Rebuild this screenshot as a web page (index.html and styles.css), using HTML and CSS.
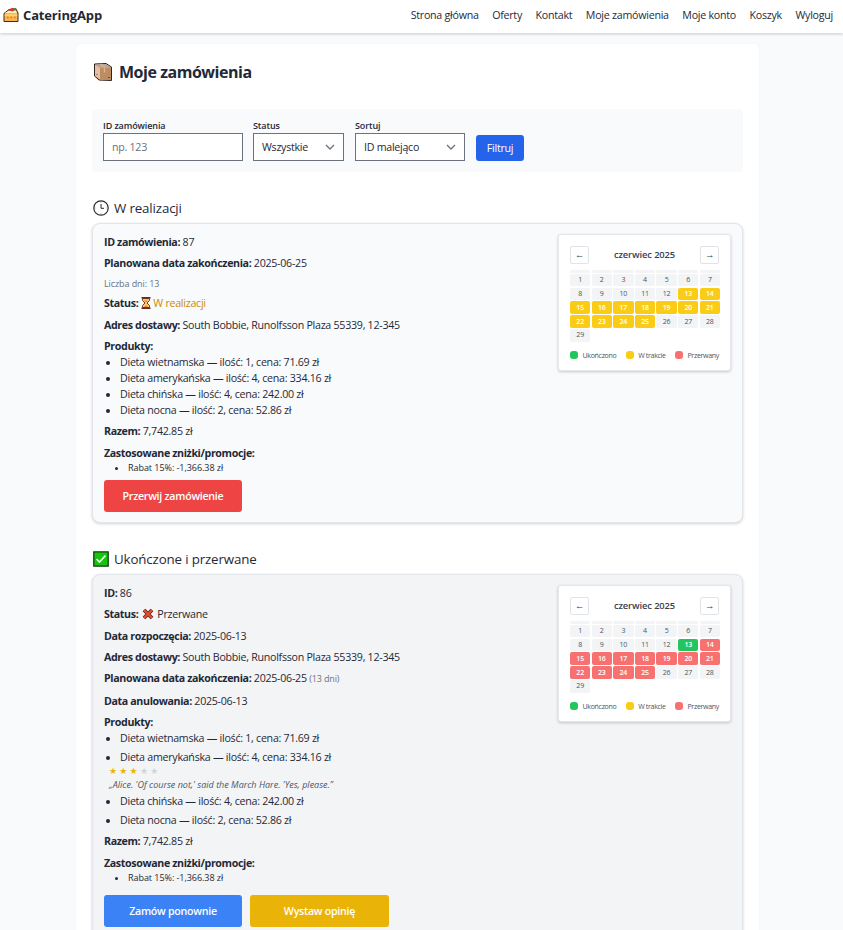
FILE: index.html
```html
<!DOCTYPE html>
<html lang="pl">
<head>
<meta charset="utf-8">
<title>CateringApp</title>
<link rel="stylesheet" href="styles.css">
</head>
<body>
<header class="navbar">
  <a class="brand"><svg class="brand-icon" viewBox="0 0 16 16"><path d="M1 6.5 6 2.5 13 2l2 4v8.5H1z" fill="#f8b64c" stroke="#3b2a20"/><path d="M2 6 7 3h5l2 3z" fill="#fff0c9"/><path d="M5 3.5 9 .8l4 1.2-3 2.5z" fill="#d63b2f"/><path d="M10 1.2 13.5 1 12 4z" fill="#3b8b3f"/><path d="M1.8 7.2h12.4v2H1.8z" fill="#ffd36b"/><path d="M4 10.5h1.5m2 0H9m2 0h1.5" stroke="#e27128" stroke-width="1.5"/></svg><span class="brand-name">CateringApp</span></a>
  <nav class="links"><a>Strona główna</a><a>Oferty</a><a>Kontakt</a><a>Moje zamówienia</a><a>Moje konto</a><a>Koszyk</a><a>Wyloguj</a></nav>
</header>
<main class="page">
  <h1 class="title"><svg class="box-icon" viewBox="0 0 20 20"><path d="M1.5 2 13 1.5 18.5 5v13.5L6 18 1.5 14z" fill="#c49a74" stroke="#30241f"/><path d="M2 2.5 13 2l5 3.5H7z" fill="#b9a79a"/><path d="M2 3 7 6v11.5L2 13.5z" fill="#e5c0a8"/><path d="M7 6h11v12H7z" fill="#bd8d62"/><path d="M11.5 6v4.5M7.5 2.2 12 5.5" stroke="#d8b38d" stroke-width="1.5"/><path d="M15 15.5h2M3.5 12l1 1" stroke="#6c4935"/></svg><span>Moje zamówienia</span></h1>
  <form class="filters">
    <label class="field"><span class="label">ID zamówienia</span><input class="control input-id" type="text" placeholder="np. 123"></label>
    <div class="field"><span class="label">Status</span><div class="control select status-select"><span>Wszystkie</span><svg class="chevron" viewBox="0 0 10 6"><path d="m1 1 4 4 4-4" fill="none" stroke="#6b7280" stroke-width="1.3"/></svg></div></div>
    <div class="field"><span class="label">Sortuj</span><div class="control select sort-select"><span>ID malejąco</span><svg class="chevron" viewBox="0 0 10 6"><path d="m1 1 4 4 4-4" fill="none" stroke="#6b7280" stroke-width="1.3"/></svg></div></div>
    <button class="filter-button" type="button">Filtruj</button>
  </form>

  <h2 class="section-title"><svg class="section-icon" viewBox="0 0 16 16"><circle cx="8" cy="8" r="7.2" fill="#fff" stroke="#292929" stroke-width="1.2"/><path d="M8 4v4.3h3" fill="none" stroke="#292929"/><path d="M8 1.8v1M8 13.2v1M1.8 8h1M13.2 8h1" stroke="#999" stroke-width=".7"/></svg><span>W realizacji</span></h2>
  <article class="card active-card">
    <div class="details">
      <p><b>ID zamówienia:</b> 87</p>
      <p class="date-row"><b>Planowana data zakończenia:</b> 2025-06-25</p>
      <p class="days">Liczba dni: 13</p>
      <p><b>Status:</b> <svg class="hourglass" viewBox="0 0 10 12"><path d="M1.5 1.5v2L4 6 1.5 8.5v2h7v-2L6 6l2.500-2.500v-2z" fill="#f9c779" stroke="#794022"/><path d="M.5.8h9M.5 11.200h9" stroke="#622b1b" stroke-width="1.500"/><path d="M3 3.500h4L5 5.500zM3 10l2-2 2 2z" fill="#ed8b22"/></svg> <span class="pending">W realizacji</span></p>
      <p><b>Adres dostawy:</b> <span class="address">South Bobbie, Runolfsson Plaza 55339, 12-345</span></p>
      <p class="list-title"><b>Produkty:</b></p>
      <ul class="products"><li>Dieta wietnamska — ilość: 1, cena: 71.69 zł</li><li>Dieta amerykańska — ilość: 4, cena: 334.16 zł</li><li>Dieta chińska — ilość: 4, cena: 242.00 zł</li><li>Dieta nocna — ilość: 2, cena: 52.86 zł</li></ul>
      <p><b>Razem:</b> 7,742.85 zł</p>
      <p class="list-title"><b>Zastosowane zniżki/promocje:</b></p>
      <ul class="discounts"><li>Rabat 15%: -1,366.38 zł</li></ul>
      <div class="actions"><button class="action cancel" type="button">Przerwij zamówienie</button></div>
    </div>
    <aside class="calendar">
      <div class="calendar-head"><button class="arrow" type="button">←</button><strong>czerwiec 2025</strong><button class="arrow" type="button">→</button></div>
      <div class="days-grid"><i></i><i></i><i></i><i></i><i></i><i></i><i></i><span>1</span><span>2</span><span>3</span><span>4</span><span>5</span><span>6</span><span>7</span><span>8</span><span>9</span><span>10</span><span>11</span><span>12</span><span class="yellow">13</span><span class="yellow">14</span><span class="yellow">15</span><span class="yellow">16</span><span class="yellow">17</span><span class="yellow">18</span><span class="yellow">19</span><span class="yellow">20</span><span class="yellow">21</span><span class="yellow">22</span><span class="yellow">23</span><span class="yellow">24</span><span class="yellow">25</span><span>26</span><span>27</span><span>28</span><span>29</span></div>
      <div class="legend"><span><em class="green"></em>Ukończono</span><span><em class="yellow"></em>W trakcie</span><span><em class="red"></em>Przerwany</span></div>
    </aside>
  </article>

  <h2 class="section-title finished-title"><svg class="section-icon" viewBox="0 0 16 16"><path d="M.8.8h14.400v14.400H.8z" fill="#16c60c" stroke="#173d17" stroke-width="1.300"/><path d="m3.500 8 3 3 6-6.500" fill="none" stroke="#f3fff3" stroke-width="1.700"/></svg><span>Ukończone i przerwane</span></h2>
  <article class="card finished-card">
    <div class="details">
      <p><b>ID:</b> 86</p>
      <p><b>Status:</b> <svg class="cross" viewBox="0 0 12 12"><path d="m2 2 8 8m0-8-8 8" stroke="#572620" stroke-width="3.800"/><path d="m2 2 8 8m0-8-8 8" stroke="#e84b31" stroke-width="2.200"/></svg> Przerwane</p>
      <p><b>Data rozpoczęcia:</b> 2025-06-13</p>
      <p><b>Adres dostawy:</b> <span class="address">South Bobbie, Runolfsson Plaza 55339, 12-345</span></p>
      <p><b>Planowana data zakończenia:</b> 2025-06-25 <small>(13 dni)</small></p>
      <p><b>Data anulowania:</b> 2025-06-13</p>
      <p class="list-title"><b>Produkty:</b></p>
      <ul class="products spaced"><li>Dieta wietnamska — ilość: 1, cena: 71.69 zł</li><li>Dieta amerykańska — ilość: 4, cena: 334.16 zł<div class="review"><div class="stars"><span>★</span><span>★</span><span>★</span><span class="empty">★</span><span class="empty">★</span></div><div class="quote">„Alice. 'Of course not,' said the March Hare. 'Yes, please.”</div></div></li><li>Dieta chińska — ilość: 4, cena: 242.00 zł</li><li>Dieta nocna — ilość: 2, cena: 52.86 zł</li></ul>
      <p><b>Razem:</b> 7,742.85 zł</p>
      <p class="list-title"><b>Zastosowane zniżki/promocje:</b></p>
      <ul class="discounts"><li>Rabat 15%: -1,366.38 zł</li></ul>
      <div class="actions"><button class="action again" type="button">Zamów ponownie</button><button class="action opinion" type="button">Wystaw opinię</button></div>
    </div>
    <aside class="calendar">
      <div class="calendar-head"><button class="arrow" type="button">←</button><strong>czerwiec 2025</strong><button class="arrow" type="button">→</button></div>
      <div class="days-grid"><i></i><i></i><i></i><i></i><i></i><i></i><i></i><span>1</span><span>2</span><span>3</span><span>4</span><span>5</span><span>6</span><span>7</span><span>8</span><span>9</span><span>10</span><span>11</span><span>12</span><span class="green">13</span><span class="red">14</span><span class="red">15</span><span class="red">16</span><span class="red">17</span><span class="red">18</span><span class="red">19</span><span class="red">20</span><span class="red">21</span><span class="red">22</span><span class="red">23</span><span class="red">24</span><span class="red">25</span><span>26</span><span>27</span><span>28</span><span>29</span></div>
      <div class="legend"><span><em class="green"></em>Ukończono</span><span><em class="yellow"></em>W trakcie</span><span><em class="red"></em>Przerwany</span></div>
    </aside>
  </article>
</main>
</body>
</html>
```
FILE: styles.css
```css
*{box-sizing:border-box}
html{height:930px;overflow:hidden}
body{margin:0;height:930px;overflow:hidden;background:#f9fafb;color:#1f2937;font:10.67px/16px "Open Sans","Noto Sans",sans-serif;letter-spacing:-.27px}
h1,h2,p,ul{margin:0;padding:0}
button,input{font:inherit;letter-spacing:inherit}
svg{flex:none}
b{font-weight:700;letter-spacing:-.37px}
.navbar{height:33px;padding:0 10px 3px 3px;display:flex;align-items:center;justify-content:space-between;background:#fff;box-shadow:0 1px 3px #0003;position:relative}
.brand{display:flex;align-items:center;gap:4px}
.brand-icon{width:16px;height:16px}
.brand-name{font-size:13px;font-weight:700;letter-spacing:-.15px}
.links{display:flex;gap:13.5px;letter-spacing:-.25px}
.page{width:683px;margin:11px auto 0 76px;padding:17px 16px;background:#fff;border-radius:5px;box-shadow:0 0 2px #0000000d}
.title{height:22px;display:flex;align-items:center;gap:6px;font-size:16px;font-weight:700;letter-spacing:-.47px;padding-left:1px}
.box-icon{width:20px;height:20px}
.filters{height:63px;margin-top:26px;padding:11px;background:#f9fafb;border-radius:4px;display:flex;align-items:flex-end}
.field{display:flex;flex-direction:column;margin-right:11px}
.field:first-child{margin-right:10px}
.label{font-size:9px;font-weight:600;line-height:13px;letter-spacing:-.1px;height:14px}
.control{height:28px;border:1px solid #6b7280;border-radius:0;background:#fff;padding:0 8px;color:#1f2937}
.control::placeholder{color:#6b7280;opacity:1}
.input-id{width:140px}
.select{display:flex;align-items:center;justify-content:space-between}
.status-select{width:91px}.sort-select{width:110px}
.chevron{width:10px;height:6px}
.filter-button{width:48px;height:26px;padding:0;background:#2563eb;color:#fff;border:0;border-radius:3px}
.section-title{height:22px;margin:25px 0 4px;padding-left:1px;display:flex;align-items:center;gap:5px;font-size:13.33px;font-weight:500;letter-spacing:-.15px}
.section-icon{width:16px;height:16px}
.card{display:flex;justify-content:space-between;align-items:flex-start;width:651px;padding:10px 11px;border:1px solid #e2e5e9;border-radius:8px;background:#f9fafb;box-shadow:0 1px 3px #0000002e}
.active-card{height:300px}
.finished-card{height:378px;background:#f3f4f6}
.details{flex:1}
.details p{margin-bottom:5.330px}
.details .days{font-size:9px;color:#6b7280;line-height:13.33px;letter-spacing:-.1px}
.details .list-title{margin-bottom:0}
.pending{color:#ca8a04}
.hourglass{width:10px;height:12px;vertical-align:-2px}
.cross{width:12px;height:12px;vertical-align:-2px;margin:0 1px}
small{font-size:9px;color:#6b7280;letter-spacing:-.15px}
.products{padding-left:16px;margin-bottom:5.330px}
.spaced li+li{margin-top:2.670px}
.review{margin-left:-11px}
.stars{height:13px;display:flex;gap:2px;font:9px/13px "DejaVu Sans",sans-serif;color:#eab308;letter-spacing:0}
.stars span{width:8.300px}
.stars .empty{color:#d1d5db}
.quote{font-size:9px;line-height:13px;font-style:italic;color:#4b5563;letter-spacing:0}
.discounts{padding-left:24px;font-size:9px;line-height:13.33px;letter-spacing:-.05px}
.actions{display:flex;gap:8px;margin-top:6px}
.finished-card .actions{margin-top:11px}
.action{width:138px;height:32px;border:0;border-radius:3px;color:#fff;font-weight:600;padding:0}
.action.opinion{width:139px}
.cancel{background:#ef4444}.again{background:#3b82f6}.opinion{background:#eab308}
.calendar{width:173px;height:137px;background:#fff;border:1px solid #e5e7eb;border-radius:3px;padding:11px;box-shadow:0 1px 3px #0003}
.calendar-head{display:flex;align-items:center;justify-content:space-between;height:18px;margin-bottom:5.500px}
.calendar-head strong{font-size:9.330px;font-weight:600;color:#374151;letter-spacing:-.1px}
.arrow{width:19px;height:18px;border:1px solid #e0e3e8;border-radius:2px;background:#fff;color:#374151;padding:0;font-size:9.330px;line-height:14px}
.days-grid{display:grid;grid-template-columns:repeat(7,1fr);grid-template-rows:3px repeat(5,12.500px);gap:1.330px;margin-right:-1px}
.days-grid i,.days-grid span{background:#f3f4f6;border-radius:2px}
.days-grid span{display:flex;align-items:center;justify-content:center;font-size:7px;line-height:12px;color:#4b5563;letter-spacing:-.2px}
.days-grid .yellow,.days-grid .red,.days-grid .green{color:#fff;font-weight:600}
.days-grid .yellow,.legend .yellow{background:#facc15}
.days-grid .red,.legend .red{background:#f87171}
.days-grid .green,.legend .green{background:#22c55e}
.legend{display:flex;justify-content:space-between;margin-top:8px;font-size:7px;line-height:11px;color:#4b5563;letter-spacing:-.3px}
.legend span{display:flex;align-items:center;gap:4.500px}
.legend em{width:8px;height:8px;border-radius:3px}
```
